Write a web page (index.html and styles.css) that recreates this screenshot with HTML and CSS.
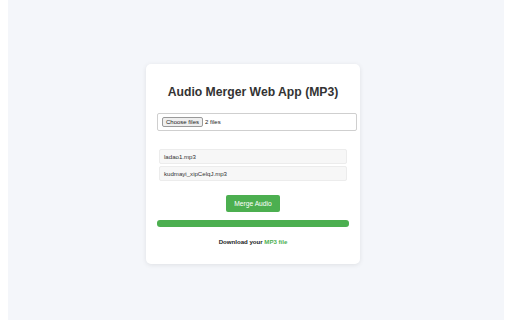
FILE: index.html
```html
<!DOCTYPE html>
<html lang="en">
<head>
<meta charset="utf-8">
<title>Audio Merger Web App (MP3)</title>
<link rel="stylesheet" href="styles.css">
</head>
<body>
<main class="page">
  <section class="card">
    <h1 class="title">Audio Merger Web App (MP3)</h1>
    <div class="file-input">
      <span class="file-btn">Choose files</span>
      <span class="file-count">2 files</span>
    </div>
    <ul class="file-list">
      <li class="file-item">ladao1.mp3</li>
      <li class="file-item">kudmayi_xipCelqJ.mp3</li>
    </ul>
    <div class="actions">
      <button class="merge-btn" type="button">Merge Audio</button>
    </div>
    <div class="progress"><div class="progress-fill"></div></div>
    <p class="download">Download your <a class="download-link" href="#">MP3 file</a></p>
  </section>
</main>
</body>
</html>
```
FILE: styles.css
```css
html {
  background: #ffffff;
  margin: 0;
  padding: 0;
}
body {
  margin: 0 8px;
  min-height: 320px;
  background: #f4f6fa;
  font-family: "Liberation Sans", Arial, sans-serif;
  color: #333333;
}
.page {
  display: flex;
  justify-content: center;
  align-items: flex-start;
  padding-top: 64px;
  padding-right: 6px;
}
.card {
  width: 192px;
  padding: 21px 11px 18px;
  background: #ffffff;
  border-radius: 5px;
  box-shadow: 0 1px 5px rgba(0, 0, 0, 0.09);
}
.title {
  margin: 0;
  font-size: 12.2px;
  line-height: 14px;
  font-weight: bold;
  text-align: center;
  color: #333333;
}
.file-input {
  margin-top: 14px;
  width: 200px;
  height: 18px;
  box-sizing: border-box;
  border: 1px solid #cfcfcf;
  border-radius: 2px;
  padding: 0 4px;
  display: flex;
  align-items: center;
  gap: 2px;
  font-size: 6px;
}
.file-btn {
  display: inline-flex;
  align-items: center;
  height: 10px;
  box-sizing: border-box;
  padding: 0 3px;
  background: #efefef;
  border: 1px solid #9a9a9a;
  border-radius: 2px;
  color: #222222;
  font-size: 6px;
}
.file-count {
  color: #222222;
}
.file-list {
  list-style: none;
  margin: 18px 2px 0;
  padding: 0;
  display: flex;
  flex-direction: column;
  gap: 2px;
}
.file-item {
  height: 15px;
  box-sizing: border-box;
  display: flex;
  align-items: center;
  padding: 0 4px;
  background: #f7f7f7;
  border: 1px solid #ececec;
  border-radius: 2px;
  font-size: 6.1px;
  color: #333333;
}
.actions {
  margin-top: 14px;
  display: flex;
  justify-content: center;
}
.merge-btn {
  width: 54px;
  height: 17px;
  padding: 0;
  border: none;
  border-radius: 2px;
  background: #4caf50;
  color: #ffffff;
  font-family: "Liberation Sans", Arial, sans-serif;
  font-size: 6.7px;
}
.progress {
  margin-top: 8px;
  height: 7px;
  border-radius: 3px;
  background: #e0e0e0;
  overflow: hidden;
}
.progress-fill {
  width: 100%;
  height: 100%;
  background: #4caf50;
}
.download {
  margin: 11px 0 0;
  text-align: center;
  font-size: 6.1px;
  line-height: 8px;
  font-weight: bold;
  color: #222222;
}
.download-link {
  color: #4caf50;
  text-decoration: none;
}
```
